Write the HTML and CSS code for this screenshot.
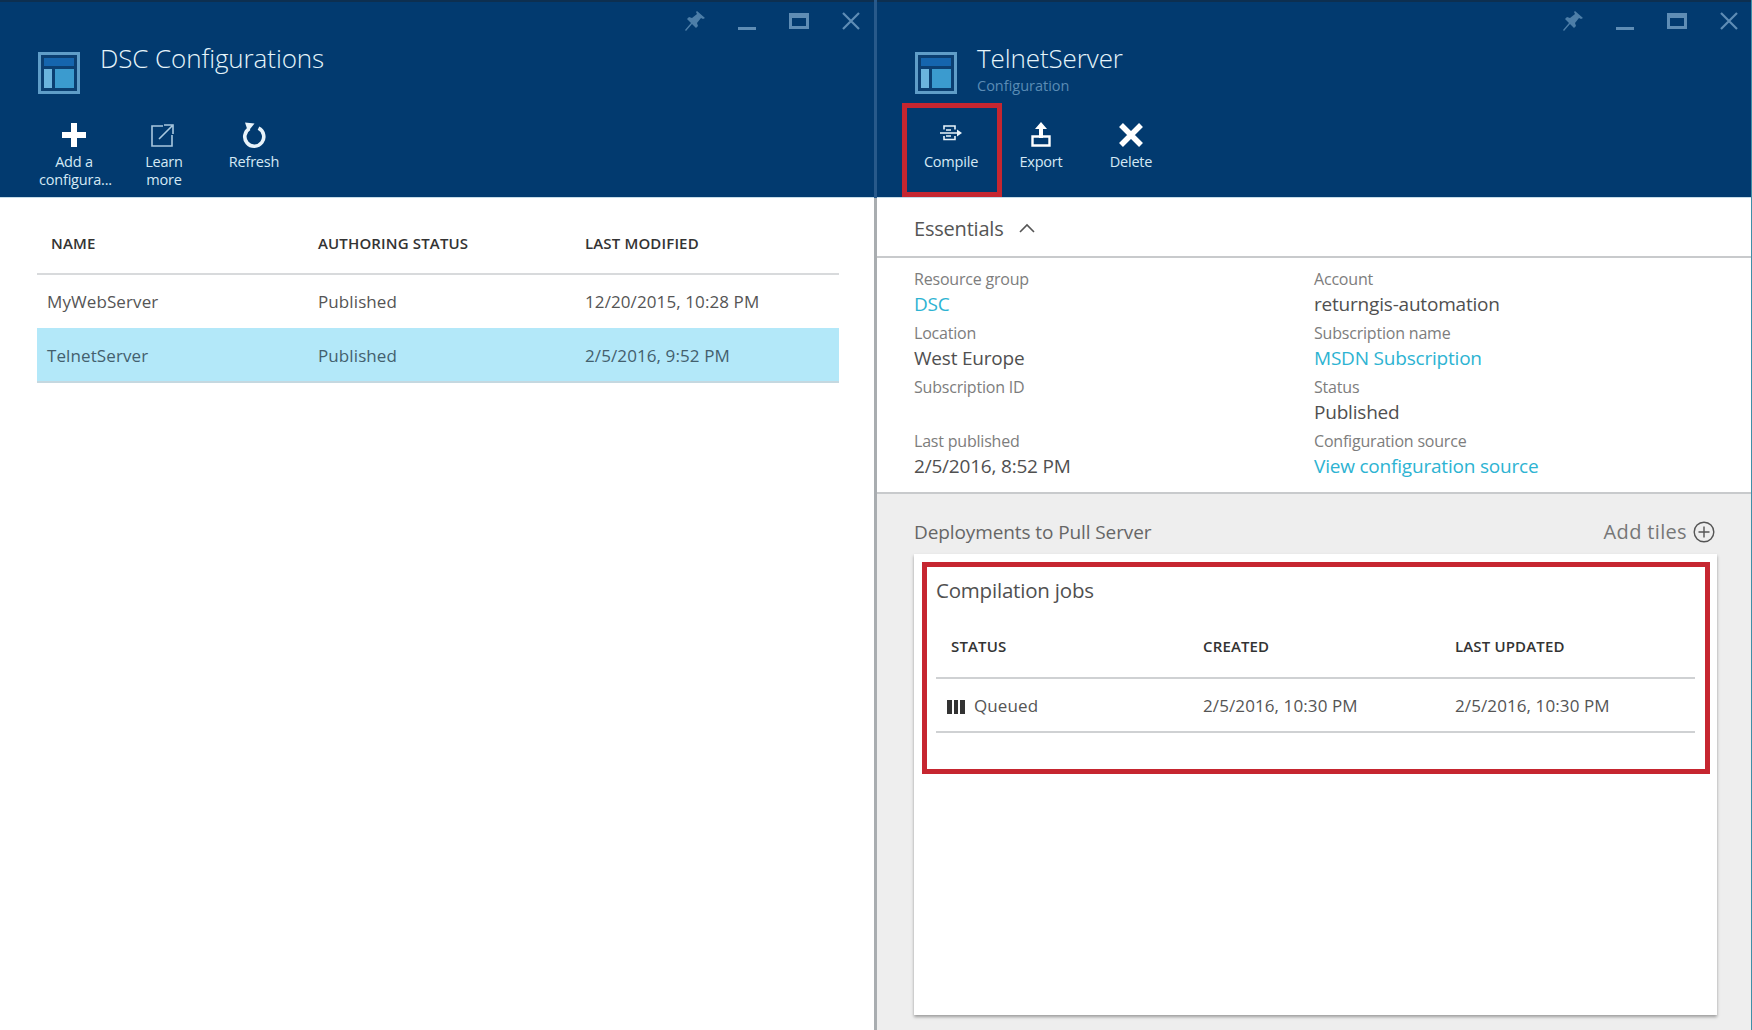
FILE: index.html
```html
<!DOCTYPE html>
<html lang="en">
<head>
    <meta charset="UTF-8">
    <title>DSC Configurations</title>
    <link rel="stylesheet" href="styles.css">
</head>
<body>
    <svg class="defs" width="0" height="0">
        <symbol id="i-blade" viewBox="0 0 42 42">
            <rect x="1.5" y="1.5" width="39" height="39" fill="#0b3f72" stroke="#5f9dc8" stroke-width="3"/>
            <rect x="6" y="6" width="30" height="8" fill="#1565ae"/>
            <rect x="6" y="17" width="8" height="19" fill="#6bb4de"/>
            <rect x="17" y="17" width="19" height="19" fill="#3b9bcf"/>
        </symbol>
        <symbol id="i-pin" viewBox="0 0 24 24">
            <path d="M14 2l8 7-2 1-2-1-4 5 1 3-2 2-4-4-6 7-1-1 6-7-4-4 2-2 3 1 5-4-1-2z" fill="#4d7ea8"/>
        </symbol>
        <symbol id="i-min" viewBox="0 0 24 24">
            <rect x="3" y="18" width="18" height="3" fill="#5f8db5"/>
        </symbol>
        <symbol id="i-max" viewBox="0 0 24 24">
            <path d="M2 4h20v16H2zM5 9v8h14V9z" fill="#5f8db5" fill-rule="evenodd"/>
        </symbol>
        <symbol id="i-close" viewBox="0 0 24 24">
            <path d="M4 4l16 16M20 4L4 20" stroke="#5f8db5" stroke-width="2.2" fill="none"/>
        </symbol>
        <symbol id="i-plus" viewBox="0 0 28 28">
            <path d="M11 2h6v9h9v6h-9v9h-6v-9H2v-6h9z" fill="#fff"/>
        </symbol>
        <symbol id="i-link" viewBox="0 0 28 28">
            <path d="M15 5H4v20h20V14" fill="none" stroke="#a9c8df" stroke-width="1.6"/>
            <path d="M11 18L24 5M16 4h9v9" fill="none" stroke="#a9c8df" stroke-width="1.6"/>
        </symbol>
        <symbol id="i-refresh" viewBox="0 0 28 28">
            <path d="M9.500 7.500A9.500 9.500 0 1 0 18.500 7.200" fill="none" stroke="#e8f3fa" stroke-width="3.6"/>
            <path d="M5 1.500l9.500 1-6.500 8z" fill="#e8f3fa"/>
        </symbol>
        <symbol id="i-compile" viewBox="0 0 28 28">
            <path d="M7 8.500V5h11v3.500M7 15v3.500h11V15" fill="none" stroke="#e8f3fa" stroke-width="1.6"/>
            <path d="M3 12h18M9 9h5M9 15h5" stroke="#e8f3fa" stroke-width="1.5"/>
            <path d="M20 8.500l5 3.500-5 3.500z" fill="#e8f3fa"/>
        </symbol>
        <symbol id="i-export" viewBox="0 0 28 28">
            <path d="M14 1l6 7h-4v9h-4V8H8z" fill="#fff"/>
            <path d="M5.500 15.500h17v9h-17z" fill="none" stroke="#fff" stroke-width="2.4"/>
        </symbol>
        <symbol id="i-delete" viewBox="0 0 28 28">
            <path d="M4 4l20 20M24 4L4 24" stroke="#fff" stroke-width="5.5" fill="none"/>
        </symbol>
    </svg>

    <main class="portal">
        <section class="blade blade-list">
            <header class="blade-head">
                <div class="window-controls">
                    <svg><use href="#i-pin"/></svg>
                    <svg><use href="#i-min"/></svg>
                    <svg><use href="#i-max"/></svg>
                    <svg><use href="#i-close"/></svg>
                </div>
                <div class="blade-title">
                    <svg class="blade-icon"><use href="#i-blade"/></svg>
                    <div>
                        <h1>DSC Configurations</h1>
                    </div>
                </div>
                <div class="commands">
                    <div class="command">
                        <svg><use href="#i-plus"/></svg>
                        <span>Add a configura...</span>
                    </div>
                    <div class="command">
                        <svg class="nudge-left"><use href="#i-link"/></svg>
                        <span>Learn more</span>
                    </div>
                    <div class="command">
                        <svg><use href="#i-refresh"/></svg>
                        <span>Refresh</span>
                    </div>
                </div>
            </header>
            <div class="list-body">
                <table class="config-table">
                    <thead>
                        <tr>
                            <th class="col-name">NAME</th>
                            <th>AUTHORING STATUS</th>
                            <th>LAST MODIFIED</th>
                        </tr>
                    </thead>
                    <tbody>
                        <tr>
                            <td>MyWebServer</td>
                            <td>Published</td>
                            <td>12/20/2015, 10:28 PM</td>
                        </tr>
                        <tr class="selected">
                            <td>TelnetServer</td>
                            <td>Published</td>
                            <td>2/5/2016, 9:52 PM</td>
                        </tr>
                    </tbody>
                </table>
            </div>
        </section>

        <section class="blade blade-detail">
            <header class="blade-head">
                <div class="window-controls">
                    <svg><use href="#i-pin"/></svg>
                    <svg><use href="#i-min"/></svg>
                    <svg><use href="#i-max"/></svg>
                    <svg><use href="#i-close"/></svg>
                </div>
                <div class="blade-title">
                    <svg class="blade-icon"><use href="#i-blade"/></svg>
                    <div>
                        <h1>TelnetServer</h1>
                        <p class="blade-sub">Configuration</p>
                    </div>
                </div>
                <div class="commands">
                    <div class="command marked">
                        <svg><use href="#i-compile"/></svg>
                        <span>Compile</span>
                    </div>
                    <div class="command">
                        <svg><use href="#i-export"/></svg>
                        <span>Export</span>
                    </div>
                    <div class="command">
                        <svg><use href="#i-delete"/></svg>
                        <span>Delete</span>
                    </div>
                </div>
            </header>

            <div class="essentials">
                <div class="essentials-head">
                    <span>Essentials</span>
                    <svg width="16" height="10" viewBox="0 0 16 10"><path d="M1 9l7-7 7 7" fill="none" stroke="#555" stroke-width="1.6"/></svg>
                </div>
                <dl class="essentials-grid">
                    <div><dt>Resource group</dt><dd><a href="#">DSC</a></dd></div>
                    <div><dt>Account</dt><dd>returngis-automation</dd></div>
                    <div><dt>Location</dt><dd>West Europe</dd></div>
                    <div><dt>Subscription name</dt><dd><a href="#">MSDN Subscription</a></dd></div>
                    <div><dt>Subscription ID</dt><dd></dd></div>
                    <div><dt>Status</dt><dd>Published</dd></div>
                    <div><dt>Last published</dt><dd>2/5/2016, 8:52 PM</dd></div>
                    <div><dt>Configuration source</dt><dd><a href="#">View configuration source</a></dd></div>
                </dl>
            </div>

            <div class="deployments">
                <div class="deployments-head">
                    <h2>Deployments to Pull Server</h2>
                    <div class="add-tiles">
                        <span>Add tiles</span>
                        <svg width="22" height="22" viewBox="0 0 22 22"><circle cx="11" cy="11" r="9.800" fill="none" stroke="#555" stroke-width="1.4"/><path d="M11 5.500v11M5.500 11h11" stroke="#555" stroke-width="1.4"/></svg>
                    </div>
                </div>
                <div class="tile">
                    <div class="jobs">
                        <h3>Compilation jobs</h3>
                        <table class="jobs-table">
                            <thead>
                                <tr>
                                    <th>STATUS</th>
                                    <th>CREATED</th>
                                    <th>LAST UPDATED</th>
                                </tr>
                            </thead>
                            <tbody>
                                <tr>
                                    <td class="queued"><i class="queued-bars"></i>Queued</td>
                                    <td>2/5/2016, 10:30 PM</td>
                                    <td>2/5/2016, 10:30 PM</td>
                                </tr>
                            </tbody>
                        </table>
                    </div>
                </div>
            </div>
        </section>
    </main>
</body>
</html>
```

FILE: styles.css
```css
* {
    box-sizing: border-box;
}

html, body {
    margin: 0;
    height: 100%;
    overflow: hidden;
}

body {
    font-family: "Open Sans", "Noto Sans", sans-serif;
    color: #555;
    background: #fff;
}

.defs {
    display: block;
    height: 0;
}

.portal {
    display: grid;
    grid-template-columns: 877px 875px;
    height: 1030px;
}

.blade {
    display: flex;
    flex-direction: column;
    min-width: 0;
    height: 1030px;
}

.blade-list {
    border-right: 3px solid #a9adb0;
}

.blade-detail {
    border-right: 1px solid #3f8fa8;
}

/* header */
.blade-head {
    height: 198px;
    flex: none;
    background: #023a6f;
    border-top: 2px solid #0d2f50;
    border-bottom: 1px solid #c4dbe8;
    display: flex;
    flex-direction: column;
}

.blade-list .blade-head {
    box-shadow: 3px 0 0 #28598a;
}

.window-controls {
    height: 42px;
    padding: 7px 11px 0 0;
    display: flex;
    justify-content: flex-end;
    gap: 28px;
}

.blade-detail .window-controls {
    padding-right: 10px;
}

.window-controls svg {
    width: 24px;
    height: 24px;
}

.blade-title {
    height: 74px;
    padding-left: 38px;
    display: flex;
    gap: 20px;
}

.blade-icon {
    width: 42px;
    height: 42px;
    margin-top: 8px;
    flex: none;
}

h1 {
    margin: -1px 0 0;
    font-size: 26px;
    font-weight: 300;
    line-height: 30px;
    letter-spacing: -0.1px;
    color: #e6f5fb;
}

.blade-sub {
    margin: 3px 0 0;
    font-size: 14.5px;
    line-height: 20px;
    color: #5a8cb5;
}

.commands {
    padding-left: 29px;
    display: flex;
}

.command {
    position: relative;
    width: 90px;
    height: 79px;
    padding-top: 3px;
    text-align: center;
    font-size: 14.5px;
    line-height: 18px;
    letter-spacing: -0.2px;
    color: #d5e9f5;
}

.command svg {
    display: block;
    width: 28px;
    height: 28px;
    margin: 0 auto 4px;
}

.command svg.nudge-left {
    transform: translateX(-2px);
}

.command span {
    display: block;
    padding: 0 10px;
}

/* red annotation around the command */
.command.marked::after {
    content: "";
    position: absolute;
    top: -15px;
    left: -4px;
    right: -6px;
    bottom: 0;
    border: 5px solid #c62630;
}

/* list blade */
.list-body {
    flex: 1;
    padding: 0 0 0 37px;
}

table {
    border-collapse: collapse;
    table-layout: fixed;
}

.config-table {
    width: 802px;
}

.config-table th {
    height: 76px;
    padding: 15px 0 0 0;
    text-align: left;
    font-size: 15px;
    font-weight: 600;
    letter-spacing: 0.15px;
    color: #333;
    border-bottom: 2px solid #d8dadc;
}

.config-table th:first-child {
    width: 281px;
    padding-left: 14px;
}

.config-table th:nth-child(2) {
    width: 267px;
}

.config-table td {
    height: 54px;
    padding: 0;
    font-size: 17px;
    letter-spacing: 0.1px;
    color: #555;
}

.config-table td:first-child {
    padding-left: 10px;
}

.config-table .selected td {
    padding-top: 1px;
    background: #b3e8f9;
    color: #43606e;
    border-bottom: 2px solid #c5d8e0;
}

/* detail blade */
.essentials {
    flex: none;
    height: 296px;
    border-bottom: 2px solid #c8cacc;
}

.essentials-head {
    height: 60px;
    padding: 2px 0 0 37px;
    display: flex;
    align-items: center;
    gap: 15px;
    font-size: 20px;
    letter-spacing: -0.2px;
    border-bottom: 2px solid #c8cacc;
}

.essentials-grid {
    margin: 0;
    padding: 8px 0 0 37px;
    display: grid;
    grid-template-columns: 400px 1fr;
    grid-auto-rows: 54px;
}

dt {
    font-size: 16px;
    line-height: 26px;
    letter-spacing: -0.2px;
    color: #7d7d7d;
}

dd {
    margin: -1px 0 0;
    font-size: 19px;
    line-height: 26px;
    letter-spacing: -0.2px;
    color: #505050;
}

a {
    color: #2db3d2;
    text-decoration: none;
}

.deployments {
    flex: 1;
    padding: 0 34px 0 37px;
    background: #eeeeee;
    display: flex;
    flex-direction: column;
}

.deployments-head {
    height: 60px;
    display: flex;
    align-items: center;
    justify-content: space-between;
    padding-top: 15px;
}

h2 {
    margin: 0;
    font-size: 19px;
    font-weight: 400;
    letter-spacing: -0.1px;
    color: #666;
}

.add-tiles {
    display: flex;
    align-items: center;
    gap: 6px;
    padding-right: 2px;
    font-size: 20px;
    letter-spacing: 0.35px;
    color: #777;
}

.tile {
    height: 461px;
    padding: 8px 7px 0 8px;
    background: #fff;
    box-shadow: 0 2px 3px rgba(0, 0, 0, 0.35);
}

.jobs {
    height: 212px;
    padding: 0 10px 0 9px;
    border: 5px solid #c62630;
}

h3 {
    margin: 0;
    height: 52px;
    padding-top: 9px;
    font-size: 20.5px;
    font-weight: 400;
    line-height: 28px;
    letter-spacing: -0.2px;
    color: #505050;
}

.jobs-table {
    width: 100%;
}

.jobs-table th {
    height: 59px;
    padding: 0 0 4px 15px;
    text-align: left;
    font-size: 15px;
    font-weight: 600;
    letter-spacing: 0.15px;
    color: #333;
    border-bottom: 2px solid #cfd1d3;
}

.jobs-table th:first-child {
    width: 252px;
}

.jobs-table th:nth-child(2) {
    width: 252px;
}

.jobs-table td {
    height: 54px;
    padding: 0 0 0 15px;
    font-size: 17px;
    letter-spacing: 0.1px;
    color: #555;
    border-bottom: 2px solid #cfd1d3;
}

.jobs-table td.queued {
    padding-left: 11px;
}

.queued-bars {
    display: inline-block;
    width: 18px;
    height: 14px;
    margin-right: 9px;
    vertical-align: -2px;
    background: repeating-linear-gradient(90deg, #333 0 4.700px, transparent 4.700px 6.650px);
}
```
